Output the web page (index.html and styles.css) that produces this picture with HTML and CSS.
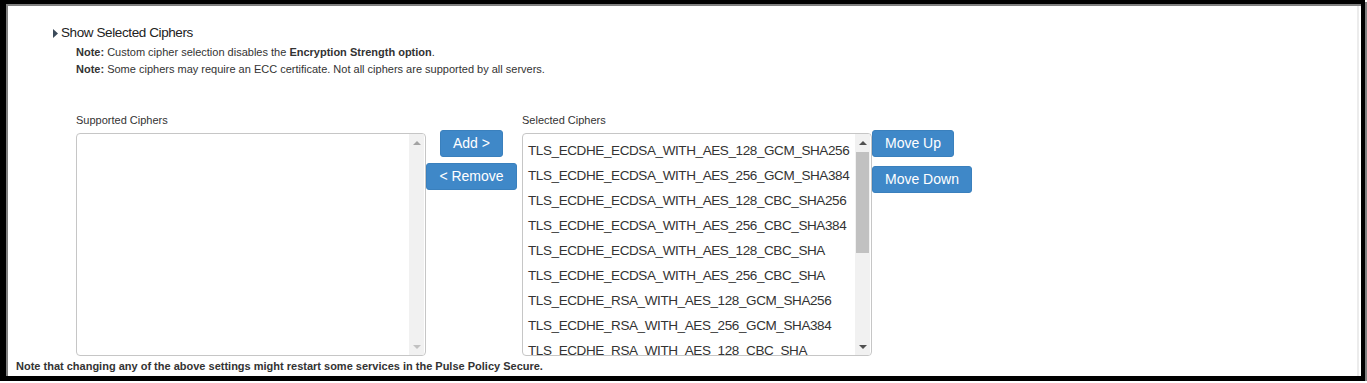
FILE: index.html
```html
<!DOCTYPE html>
<html lang="en">
<head>
  <meta charset="UTF-8">
  <title>Selected Ciphers</title>
  <link rel="stylesheet" href="styles.css">
</head>
<body>

  <div class="frame">

    <div class="toggle">
      <svg class="caret" width="5" height="9" viewBox="0 0 5 9"><path d="M0 0 L5 4.5 L0 9 Z" fill="#3b4a5a"/></svg>
      <span>Show Selected Ciphers</span>
    </div>

    <div class="notes">
      <div><b>Note:</b> Custom cipher selection disables the <b>Encryption Strength option</b>.</div>
      <div><b>Note:</b> Some ciphers may require an ECC certificate. Not all ciphers are supported by all servers.</div>
    </div>

    <div class="picker">
      <div class="list-col">
        <div class="list-label">Supported Ciphers</div>
        <div class="listbox">
          <div class="items"></div>
          <div class="scrollbar">
            <div class="arrow up dim"></div>
            <div class="track"></div>
            <div class="arrow down dim"></div>
          </div>
        </div>
      </div>

      <div class="mid-col">
        <button class="btn">Add &gt;</button>
        <button class="btn">&lt; Remove</button>
      </div>

      <div class="list-col right">
        <div class="list-label">Selected Ciphers</div>
        <div class="listbox">
          <div class="items">
            <div class="item">TLS_ECDHE_ECDSA_WITH_AES_128_GCM_SHA256</div>
            <div class="item">TLS_ECDHE_ECDSA_WITH_AES_256_GCM_SHA384</div>
            <div class="item">TLS_ECDHE_ECDSA_WITH_AES_128_CBC_SHA256</div>
            <div class="item">TLS_ECDHE_ECDSA_WITH_AES_256_CBC_SHA384</div>
            <div class="item">TLS_ECDHE_ECDSA_WITH_AES_128_CBC_SHA</div>
            <div class="item">TLS_ECDHE_ECDSA_WITH_AES_256_CBC_SHA</div>
            <div class="item">TLS_ECDHE_RSA_WITH_AES_128_GCM_SHA256</div>
            <div class="item">TLS_ECDHE_RSA_WITH_AES_256_GCM_SHA384</div>
            <div class="item">TLS_ECDHE_RSA_WITH_AES_128_CBC_SHA</div>
          </div>
          <div class="scrollbar">
            <div class="arrow up"></div>
            <div class="track"><div class="thumb"></div></div>
            <div class="arrow down"></div>
          </div>
        </div>
      </div>

      <div class="move-col">
        <button class="btn">Move Up</button>
        <button class="btn">Move Down</button>
      </div>
    </div>

    <div class="footer-note">Note that changing any of the above settings might restart some services in the Pulse Policy Secure.</div>

  </div>

</body>
</html>
```

FILE: styles.css
```css
body { margin: 0; background: #fff; font-family: "Liberation Sans", Arial, sans-serif; color: #333; }

.frame {
  box-sizing: border-box;
  width: 1365px;
  height: 381px;
  border-style: solid;
  border-color: #000;
  border-width: 4px 4px 5px 6px;
  box-shadow: 2px 2px 0 #808080, inset 2px 2px 0 #808080, inset -2px 0 0 #fff, inset -4px 0 0 #ececec;
  padding-top: 20px;
  overflow: hidden;
}

.toggle {
  display: flex;
  align-items: center;
  gap: 3px;
  padding-left: 47px;
  font-size: 13.5px;
  letter-spacing: -0.4px;
  line-height: 18px;
  color: #222;
}

.notes {
  margin-top: 2px;
  padding-left: 70px;
  font-size: 11px;
  line-height: 17px;
  color: #333;
}

.picker {
  display: flex;
  align-items: flex-start;
  padding-left: 70px;
  margin-top: 35px;
}

.list-col { width: 350px; }
.list-col.right { margin-left: 5px; }

.list-label {
  font-size: 11px;
  line-height: 14px;
  color: #333;
  margin-bottom: 6px;
}

.listbox {
  box-sizing: border-box;
  height: 223px;
  border: 1px solid #c6c6c6;
  border-radius: 4px;
  display: flex;
  overflow: hidden;
  background: #fff;
}
.items { flex: 1; padding: 4px 0 0 5px; overflow: hidden; }
.item {
  font-size: 13.5px;
  letter-spacing: -0.4px;
  line-height: 25px;
  color: #333;
  white-space: nowrap;
}

.scrollbar {
  width: 15px;
  margin-right: 1px;
  background: #f1f1f1;
  display: flex;
  flex-direction: column;
}
.track { flex: 1; padding: 1px 1px 0 1px; }
.thumb { height: 101px; background: #c1c1c1; }
.arrow { height: 17px; display: flex; align-items: center; justify-content: center; }
.arrow::before {
  content: "";
  border-left: 4px solid transparent;
  border-right: 4px solid transparent;
}
.arrow.up::before { border-bottom: 4px solid #505050; }
.arrow.down::before { border-top: 4px solid #505050; }
.arrow.dim.up::before { border-bottom-color: #a3a3a3; }
.arrow.dim.down::before { border-top-color: #c1c1c1; }

.mid-col {
  width: 91px;
  padding-top: 17px;
  display: flex;
  flex-direction: column;
  align-items: center;
  gap: 6px;
}
.move-col {
  padding-top: 17px;
  display: flex;
  flex-direction: column;
  align-items: flex-start;
  gap: 9px;
}

.btn {
  box-sizing: border-box;
  height: 27px;
  font-family: "Liberation Sans", Arial, sans-serif;
  font-size: 14px;
  line-height: 25px;
  padding: 0 12px;
  color: #fff;
  background: #3f88c8;
  border: 1px solid #3a80bd;
  border-radius: 3px;
  cursor: pointer;
}

.footer-note {
  margin-top: 3px;
  padding-left: 10px;
  font-size: 11px;
  line-height: 14px;
  font-weight: bold;
  color: #333;
}
```
